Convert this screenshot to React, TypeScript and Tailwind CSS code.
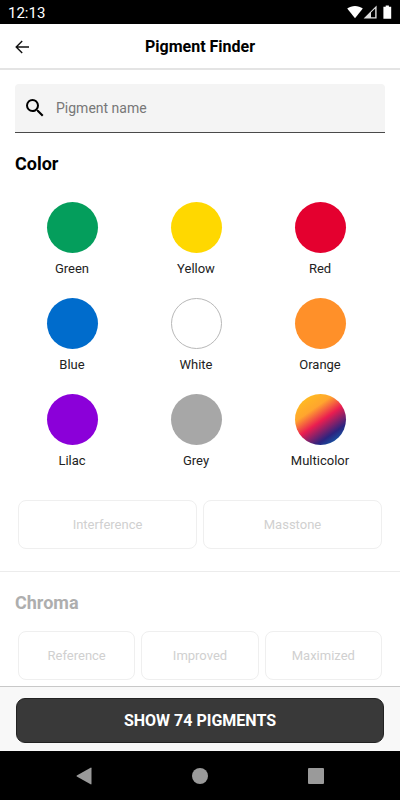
import { useState } from "react";

const colors = [
  { name: "Green", swatch: "bg-[#049e5c]" },
  { name: "Yellow", swatch: "bg-[#ffd800]" },
  { name: "Red", swatch: "bg-[#e4002f]" },
  { name: "Blue", swatch: "bg-[#006ccc]" },
  { name: "White", swatch: "border border-[#b8b8b8] bg-white" },
  { name: "Orange", swatch: "bg-[#ff9029]" },
  { name: "Lilac", swatch: "bg-[#8b00d9]" },
  { name: "Grey", swatch: "bg-[#a7a7a7]" },
  {
    name: "Multicolor",
    swatch:
      "bg-[linear-gradient(145deg,#ffc01f_8%,#ffa52e_32%,#ea1d50_52%,#2b2480_76%,#0b6db5_94%)]",
  },
];

function StatusBar() {
  return (
    <div className="flex h-6 items-center justify-between bg-black px-2 text-white">
      <span className="pt-0.5 text-[15px] leading-6">12:13</span>
      <div className="flex items-center">
        <svg width="16" height="14" viewBox="0 0 16 14" fill="currentColor">
          <path d="M0.2 3.6C4.6 0.2 11.4 0.2 15.8 3.6L8 13.2Z" />
        </svg>
        <svg width="14" height="14" viewBox="0 0 14 14" fill="#e0e0e0">
          <path
            fillRule="evenodd"
            d="M0.6 13.6L13.6 0.6V13.6ZM8 7.6V12.2H12.2V3.6Z"
          />
        </svg>
        <svg className="ml-1.5" width="9" height="14" viewBox="0 0 9 14" fill="currentColor">
          <path d="M2.7 0.4h3.2v1.4H8.2V13.7H0.4V1.8H2.7Z" />
        </svg>
      </div>
    </div>
  );
}

function Header() {
  return (
    <header className="grid h-[46px] grid-cols-[40px_1fr_40px] items-center border-b-2 border-[#e4e4e4] bg-white pt-0.5">
      <button type="button" aria-label="Back" className="flex justify-end pr-2.5">
        <svg width="16" height="16" viewBox="0 0 16 16" fill="none" stroke="#111" strokeWidth="1.4">
          <path d="M15 8H2.4M8.2 2L2.2 8L8.2 14" />
        </svg>
      </button>
      <h1 className="text-center text-base font-bold">Pigment Finder</h1>
    </header>
  );
}

function SearchField() {
  const [query, setQuery] = useState("");

  return (
    <label className="flex h-[49px] items-center gap-[9px] rounded-t border-b border-[#4a4a4a] bg-[#f4f4f4] px-2">
      <svg width="24" height="24" viewBox="0 0 24 24" fill="black">
        <path d="M15.5 14h-.79l-.28-.27A6.47 6.47 0 0 0 16 9.5 6.5 6.5 0 1 0 9.5 16c1.61 0 3.09-.59 4.23-1.57l.27.28v.79l5 4.99L20.49 19l-4.99-5zm-6 0C7.01 14 5 11.99 5 9.5S7.01 5 9.5 5 14 7.01 14 9.5 11.99 14 9.5 14z" />
      </svg>
      <input
        type="text"
        aria-label="Pigment name"
        placeholder="Pigment name"
        value={query}
        onChange={(e) => setQuery(e.target.value)}
        className="min-w-0 flex-1 bg-transparent text-sm outline-none placeholder:text-[#777]"
      />
    </label>
  );
}

function ColorOption({ name, swatch }: { name: string; swatch: string }) {
  return (
    <button type="button" className="flex h-24 flex-col items-center gap-1.5">
      <span className={`size-[51px] rounded-full ${swatch}`} />
      <span className="text-[13px] leading-5 text-[#222]">{name}</span>
    </button>
  );
}

function FilterButton({ label }: { label: string }) {
  return (
    <button
      type="button"
      disabled
      className="h-[49px] flex-1 rounded-lg border border-[#efefef] text-[13px] text-[#d0d0d0]"
    >
      {label}
    </button>
  );
}

function NavBar() {
  return (
    <nav className="grid h-[49px] grid-cols-3 items-center bg-black px-[26px] text-[#9a9a9a]">
      <button type="button" aria-label="Back" className="flex justify-center">
        <svg width="16" height="18" viewBox="0 0 16 18" fill="currentColor">
          <path d="M14.6 0.7Q15.5 0.3 15.5 1.3V16.7Q15.5 17.7 14.6 17.3L0.8 9.6Q0.1 9 0.8 8.4Z" />
        </svg>
      </button>
      <button type="button" aria-label="Home" className="flex justify-center">
        <span className="size-4 rounded-full bg-[#9a9a9a]" />
      </button>
      <button type="button" aria-label="Recent apps" className="flex justify-center">
        <span className="size-4 rounded-[1px] bg-[#9a9a9a]" />
      </button>
    </nav>
  );
}

export default function App() {
  return (
    <div className="flex min-h-screen flex-col bg-white font-[Roboto,sans-serif] text-black">
      <StatusBar />
      <Header />

      <main className="flex-1 pb-1.5">
        <section className="px-[15px] pt-3.5">
          <SearchField />
          <h2 className="mt-[19px] text-lg leading-6 font-bold">Color</h2>
        </section>

        <div className="mt-[26px] grid grid-cols-3 pr-[18px] pl-2.5">
          {colors.map((color) => (
            <ColorOption key={color.name} name={color.name} swatch={color.swatch} />
          ))}
        </div>

        <div className="mt-2.5 flex gap-1.5 px-[18px]">
          <FilterButton label="Interference" />
          <FilterButton label="Masstone" />
        </div>

        <section className="mt-[22px] border-t border-[#ececec] pt-[19px]">
          <h2 className="px-[15px] text-lg leading-6 font-bold text-[#aeaeae]">Chroma</h2>
          <div className="mt-4 flex gap-1.5 px-[18px]">
            <FilterButton label="Reference" />
            <FilterButton label="Improved" />
            <FilterButton label="Maximized" />
          </div>
        </section>
      </main>

      <footer className="border-t border-[#c8c8c8] bg-[#f8f8f8] px-4 pt-[11px] pb-2">
        <button
          type="button"
          className="h-[45px] w-full rounded-[9px] border border-[#222] bg-[#393939] text-base font-bold text-white"
        >
          SHOW 74 PIGMENTS
        </button>
      </footer>
      <NavBar />
    </div>
  );
}
